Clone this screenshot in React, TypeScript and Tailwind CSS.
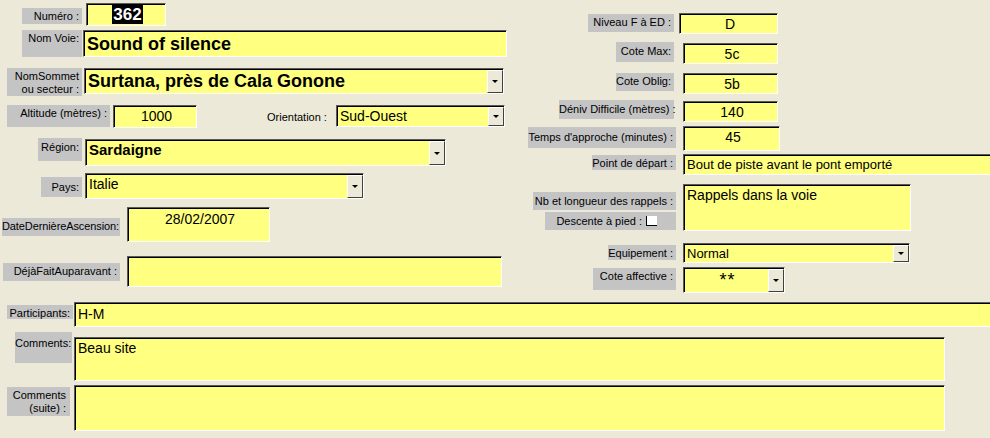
import React from "react";

type FieldProps = {
  className?: string;
  textClass?: string;
  center?: boolean;
  dropdown?: boolean;
  children?: React.ReactNode;
};

// Gray Access label, text right aligned at the top
function Label({ className = "", children }: { className?: string; children: React.ReactNode }) {
  return (
    <div
      className={
        "shrink-0 bg-[#c4c4c4] text-black text-[11px] leading-[13px] text-right pr-[3px] pt-[2px] whitespace-nowrap " +
        className
      }
    >
      {children}
    </div>
  );
}

// Yellow sunken text box, optional combo button
function Field({ className = "", textClass = "text-[14px]", center, dropdown, children }: FieldProps) {
  return (
    <div
      className={
        "shrink-0 flex bg-[#ffff80] border border-t-[#5a5a5a] border-l-[#5a5a5a] border-r-white border-b-white shadow-[inset_1px_1px_0_#000] " +
        className
      }
    >
      <div
        className={
          "flex-1 overflow-hidden whitespace-nowrap pl-[3px] pt-[1px] text-black leading-[18px] " +
          (center ? "text-center " : "") +
          textClass
        }
      >
        {children}
      </div>
      {dropdown && (
        <div className="w-[16px] shrink-0 mt-px flex items-center justify-center bg-[#ece9d8] border border-t-white border-l-white border-r-[#404040] border-b-[#404040]">
          <div className="w-0 h-0 border-l-[3px] border-r-[3px] border-t-[3px] border-l-transparent border-r-transparent border-t-black" />
        </div>
      )}
    </div>
  );
}

export default function App() {
  return (
    <div className="w-[990px] h-[438px] overflow-hidden bg-[#ece9d8] font-['Liberation_Sans',Arial,sans-serif]">
      {/* Top part: two columns */}
      <div className="flex h-[302px]">
        {/* Left column */}
        <div className="w-[510px] shrink-0 flex flex-col">
          <div className="flex items-start mt-[3px]">
            <Label className="ml-[22px] mt-[5px] w-[60px] h-[16px] pt-[1px]">Numéro :</Label>
            <Field className="ml-[4px] w-[80px] h-[23px]" center textClass="pt-[2px]">
              <span className="bg-black text-white font-bold text-[17px] leading-[15px] px-px">362</span>
            </Field>
          </div>

          <div className="flex items-start mt-[4px]">
            <Label className="ml-[22px] w-[60px] h-[27px]">Nom Voie:</Label>
            <Field className="ml-[1px] w-[424px] h-[27px]" textClass="text-[18px] font-bold leading-[24px]">
              Sound of silence
            </Field>
          </div>

          <div className="flex items-start mt-[11px]">
            <Label className="ml-[7px] w-[75px] h-[28px] leading-[12px]">
              NomSommet
              <br />
              ou secteur :
            </Label>
            <Field className="ml-[2px] w-[420px] h-[26px]" dropdown textClass="text-[18px] font-bold leading-[23px]">
              Surtana, près de Cala Gonone
            </Field>
          </div>

          <div className="flex items-start mt-[9px]">
            <Label className="ml-[7px] w-[103px] h-[22px]">Altitude (mètres) :</Label>
            <Field className="ml-[3px] w-[84px] h-[23px]" center>
              1000
            </Field>
            <div className="w-[69px] ml-[70px] mt-[6px] text-[11px] leading-[13px] text-black whitespace-nowrap">
              Orientation :
            </div>
            <Field className="w-[169px] h-[22px]" dropdown>
              Sud-Ouest
            </Field>
          </div>

          <div className="flex items-start mt-[10px]">
            <Label className="ml-[38px] w-[44px] h-[23px] pt-[3px]">Région:</Label>
            <Field className="ml-[3px] mt-[1px] w-[361px] h-[27px]" dropdown textClass="text-[15px] font-bold">
              Sardaigne
            </Field>
          </div>

          <div className="flex items-start mt-[7px]">
            <Label className="ml-[41px] mt-[4px] w-[41px] h-[20px] pt-[4px]">Pays:</Label>
            <Field className="ml-[3px] w-[279px] h-[26px]" dropdown>
              Italie
            </Field>
          </div>

          <div className="flex items-start mt-[8px]">
            <Label className="ml-[2px] mt-[11px] w-[118px] h-[18px] pr-[1px] tracking-[-0.1px]">
              DateDernièreAscension:
            </Label>
            <Field className="ml-[7px] w-[143px] h-[35px]" center textClass="text-[14px] pt-[2px]">
              28/02/2007
            </Field>
          </div>

          <div className="flex items-start mt-[14px]">
            <Label className="ml-[3px] mt-[7px] w-[117px] h-[18px]">DéjàFaitAuparavant :</Label>
            <Field className="ml-[7px] w-[375px] h-[31px]" />
          </div>
        </div>

        {/* Right column */}
        <div className="w-[480px] shrink-0 flex flex-col">
          <div className="flex items-start mt-[13px]">
            <Label className="ml-[78px] mt-[1px] w-[86px] h-[18px]">Niveau F à ED :</Label>
            <Field className="ml-[5px] w-[99px] h-[21px]" center>
              D
            </Field>
          </div>

          <div className="flex items-start mt-[8px]">
            <Label className="ml-[106px] w-[58px] h-[20px] pt-[3px]">Cote Max:</Label>
            <Field className="ml-[9px] mt-[1px] w-[95px] h-[21px]" center>
              5c
            </Field>
          </div>

          <div className="flex items-start mt-[9px]">
            <Label className="ml-[106px] w-[58px] h-[18px]">Cote Oblig:</Label>
            <Field className="ml-[9px] w-[95px] h-[21px]" center>
              5b
            </Field>
          </div>

          <div className="flex items-start mt-[6px]">
            <Label className="ml-[49px] w-[115px] h-[19px] pt-[3px]">Déniv Difficile (mètres) :</Label>
            <Field className="ml-[9px] mt-[1px] w-[95px] h-[21px]" center>
              140
            </Field>
          </div>

          <div className="flex items-start mt-[4px]">
            <Label className="ml-[18px] mt-[1px] w-[148px] h-[21px] pt-[4px]">Temps d'approche (minutes) :</Label>
            <Field className="ml-[7px] w-[97px] h-[25px]" center>
              45
            </Field>
          </div>

          <div className="flex items-start mt-[3px]">
            <Label className="ml-[82px] mt-[1px] w-[84px] h-[15px] pt-[1px]">Point de départ :</Label>
            <Field className="ml-[7px] w-[310px] h-[21px]" textClass="text-[13px]">
              Bout de piste avant le pont emporté
            </Field>
          </div>

          <div className="flex items-start mt-[9px]">
            <div className="w-[166px] shrink-0 flex flex-col">
              <Label className="ml-[23px] mt-[8px] w-[143px] h-[18px] pt-[3px]">Nb et longueur des rappels :</Label>
              <div className="ml-[35px] mt-[2px] w-[131px] h-[18px] bg-[#c4c4c4] flex items-center justify-end pr-[19px] text-[11px] leading-[13px] text-black whitespace-nowrap">
                Descente à pied :
                <div className="ml-[4px] w-[11px] h-[10px] bg-white border-l border-b border-black" />
              </div>
            </div>
            <Field className="ml-[7px] w-[228px] h-[47px]">Rappels dans la voie</Field>
          </div>

          <div className="flex items-start mt-[12px]">
            <Label className="ml-[98px] mt-[2px] w-[68px] h-[15px] pt-[1px]">Equipement :</Label>
            <Field className="ml-[7px] w-[227px] h-[20px]" dropdown textClass="text-[13px]">
              Normal
            </Field>
          </div>

          <div className="flex items-start mt-[4px]">
            <Label className="ml-[83px] mt-[1px] w-[83px] h-[22px]">Cote affective :</Label>
            <Field className="ml-[7px] w-[102px] h-[26px]" dropdown center textClass="text-[18px] tracking-[1px] pt-[3px]">
              **
            </Field>
          </div>
        </div>
      </div>

      {/* Bottom part: full-width fields */}
      <div className="flex flex-col">
        <div className="flex items-start">
          <Label className="ml-[7px] mt-[3px] w-[66px] h-[14px] pt-0">Participants:</Label>
          <Field className="ml-[1px] w-[920px] h-[25px]" textClass="text-[14px] pt-[2px]">
            H-M
          </Field>
        </div>

        <div className="flex items-start mt-[5px]">
          <Label className="ml-[15px] w-[57px] h-[31px] pt-[5px]">Comments:</Label>
          <Field className="ml-[2px] mt-[5px] w-[871px] h-[44px]">Beau site</Field>
        </div>

        <div className="flex items-start mt-[4px]">
          <Label className="ml-[7px] mt-[2px] w-[63px] h-[29px] pt-[1px] pr-[4px] leading-[13px]">
            Comments
            <br />
            (suite) :
          </Label>
          <Field className="ml-[4px] w-[871px] h-[46px]" />
        </div>
      </div>
    </div>
  );
}
